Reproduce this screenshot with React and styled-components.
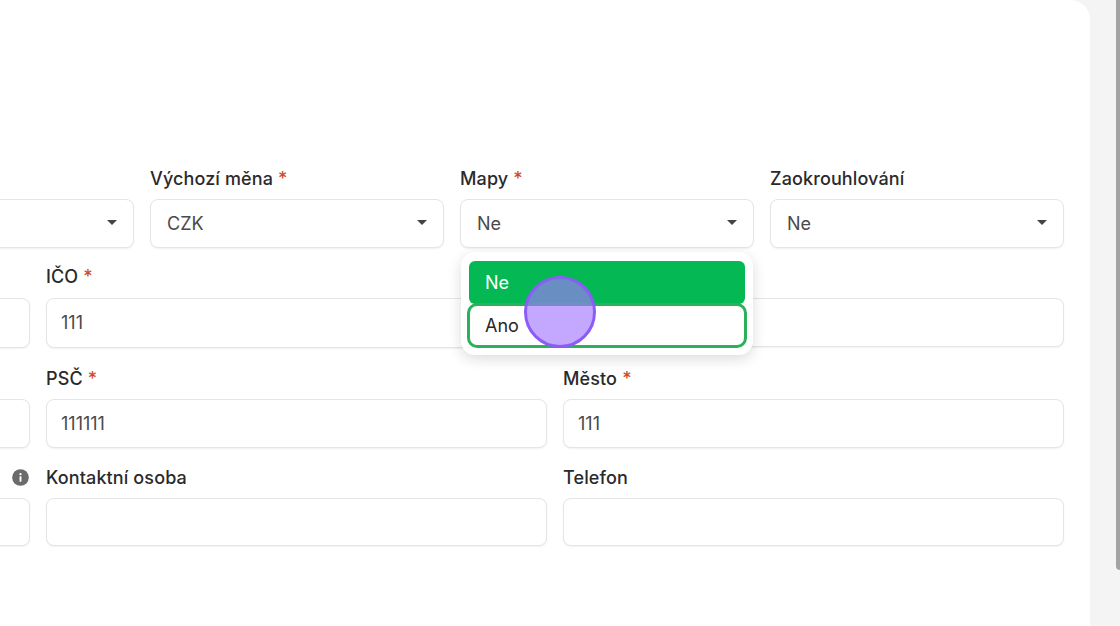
import React from 'react';
import styled, { createGlobalStyle } from 'styled-components';

const GlobalStyle = createGlobalStyle`
  html, body {
    margin: 0;
    padding: 0;
    height: 100%;
    overflow: hidden;
    background: #f4f4f5;
    font-family: Inter, "Noto Sans", sans-serif;
  }
  * { box-sizing: border-box; }
`;

const Page = styled.div`
  display: flex;
  width: 1120px;
  height: 626px;
  overflow: hidden;
  background: #f4f4f5;
`;

const Panel = styled.main`
  position: relative;
  width: 1090px;
  flex: none;
  background: #fff;
  border-top-right-radius: 20px;
  overflow: hidden;
  padding-top: 168px;
`;

const Gutter = styled.div`
  flex: 1;
  display: flex;
  justify-content: flex-end;
  align-items: flex-start;
`;

const Thumb = styled.div`
  width: 4px;
  height: 570px;
  background: #a3a3a3;
  border-radius: 0 0 0 4px;
`;

// the form is wider than the panel, its first columns are scrolled away to the left
const Form = styled.form`
  width: 1535px;
  margin-left: -471px;
  display: flex;
  flex-direction: column;
`;

const Row = styled.div`
  display: grid;
  grid-template-columns: repeat(${props => props.$cols}, ${props => props.$colWidth}px);
  justify-content: end;
  column-gap: 16px;
  height: ${props => props.$height}px;
`;

const Field = styled.div`
  position: relative;
  display: flex;
  flex-direction: column;
`;

const LabelRow = styled.div`
  display: flex;
  align-items: center;
  justify-content: space-between;
  height: 22px;
  margin-bottom: ${props => props.$gap}px;
`;

const Label = styled.label`
  font-size: 18px;
  font-weight: 450;
  letter-spacing: 0.12px;
  line-height: 22px;
  color: #2a2a2c;
  white-space: nowrap;
`;

const Star = styled.span`
  color: #d1482c;
  margin-left: 5px;
`;

const InfoIcon = styled.svg`
  width: 17px;
  height: 17px;
  margin-left: auto;
  margin-right: 1px;
  margin-bottom: 2px;
  flex: none;
`;

const Control = styled.div`
  display: flex;
  align-items: center;
  justify-content: space-between;
  height: ${props => props.$height}px;
  padding: 0 16px;
  background: #fff;
  border: 1.5px solid #e5e5e5;
  border-radius: 8px;
  box-shadow: 0 1px 2px rgba(0, 0, 0, 0.06);
  font-size: 18px;
  line-height: 22px;
  color: #4a4a4a;
`;

const TextControl = styled(Control)`
  padding-left: 14px;
`;

const Caret = styled.span`
  width: 0;
  height: 0;
  margin-top: -3px;
  margin-left: auto;
  border-left: 5px solid transparent;
  border-right: 5px solid transparent;
  border-top: 5px solid #444;
`;

const Menu = styled.div`
  position: absolute;
  z-index: 2;
  top: 84px;
  left: 1px;
  right: 1px;
  height: 103px;
  padding: 9px 6px 7px;
  background: #fff;
  border-radius: 14px;
  box-shadow: 0 4px 14px rgba(0, 0, 0, 0.14);
`;

const OptionSelected = styled.div`
  display: flex;
  align-items: center;
  height: 43px;
  margin: 0 2px;
  padding-left: 16px;
  background: #04b853;
  border-radius: 6px;
  color: #fff;
  font-size: 18px;
`;

const OptionFocused = styled.div`
  position: relative;
  display: flex;
  align-items: center;
  height: 45px;
  margin-top: -1px;
  padding-left: 15px;
  background: #fff;
  border: 3px solid #2bb05c;
  border-radius: 10px;
  color: #27272a;
  font-size: 18px;
`;

const ClickMarker = styled.div`
  position: absolute;
  z-index: 3;
  left: 524px;
  top: 276px;
  width: 72px;
  height: 72px;
  border-radius: 50%;
  border: 3px solid #8b5cf6;
  background: rgba(163, 119, 255, 0.64);
`;

const Select = ({ value, height }) => (
  <Control $height={height}>
    {value && <span>{value}</span>}
    <Caret />
  </Control>
);

const Info = () => (
  <InfoIcon viewBox="0 0 18 18">
    <circle cx="9" cy="9" r="8.8" fill="#6b6b6b" />
    <rect x="8" y="7.8" width="2" height="5.7" rx="0.5" fill="#fff" />
    <circle cx="9" cy="5.5" r="1.2" fill="#fff" />
  </InfoIcon>
);

const App = () => (
  <Page>
    <GlobalStyle />
    <Panel>
      <Form>
        <Row $cols={4} $colWidth={294} $height={98}>
          <Field>
            <LabelRow $gap={9} />
            <Select height={49} />
          </Field>
          <Field>
            <LabelRow $gap={9}><Label>Výchozí měna<Star>*</Star></Label></LabelRow>
            <Select value="CZK" height={49} />
          </Field>
          <Field>
            <LabelRow $gap={9}><Label>Mapy<Star>*</Star></Label></LabelRow>
            <Select value="Ne" height={49} />
            <Menu>
              <OptionSelected>Ne</OptionSelected>
              <OptionFocused>Ano</OptionFocused>
            </Menu>
          </Field>
          <Field>
            <LabelRow $gap={9}><Label>Zaokrouhlování</Label></LabelRow>
            <Select value="Ne" height={49} />
          </Field>
        </Row>
        <Row $cols={3} $colWidth={501} $height={102}>
          <Field>
            <LabelRow $gap={10} />
            <Control $height={50} />
          </Field>
          <Field>
            <LabelRow $gap={10}><Label>IČO<Star>*</Star></Label></LabelRow>
            <TextControl $height={50}>111</TextControl>
          </Field>
          <Field>
            <LabelRow $gap={10} />
            <Control $height={49} />
          </Field>
        </Row>
        <Row $cols={3} $colWidth={501} $height={99}>
          <Field>
            <LabelRow $gap={9} />
            <Control $height={49} />
          </Field>
          <Field>
            <LabelRow $gap={9}><Label>PSČ<Star>*</Star></Label></LabelRow>
            <TextControl $height={49}>111111</TextControl>
          </Field>
          <Field>
            <LabelRow $gap={9}><Label>Město<Star>*</Star></Label></LabelRow>
            <TextControl $height={49}>111</TextControl>
          </Field>
        </Row>
        <Row $cols={3} $colWidth={501} $height={100}>
          <Field>
            <LabelRow $gap={9}><Info /></LabelRow>
            <Control $height={48} />
          </Field>
          <Field>
            <LabelRow $gap={9}><Label>Kontaktní osoba</Label></LabelRow>
            <Control $height={48} />
          </Field>
          <Field>
            <LabelRow $gap={9}><Label>Telefon</Label></LabelRow>
            <Control $height={48} />
          </Field>
        </Row>
      </Form>
      <ClickMarker />
    </Panel>
    <Gutter>
      <Thumb />
    </Gutter>
  </Page>
);

export default App;
